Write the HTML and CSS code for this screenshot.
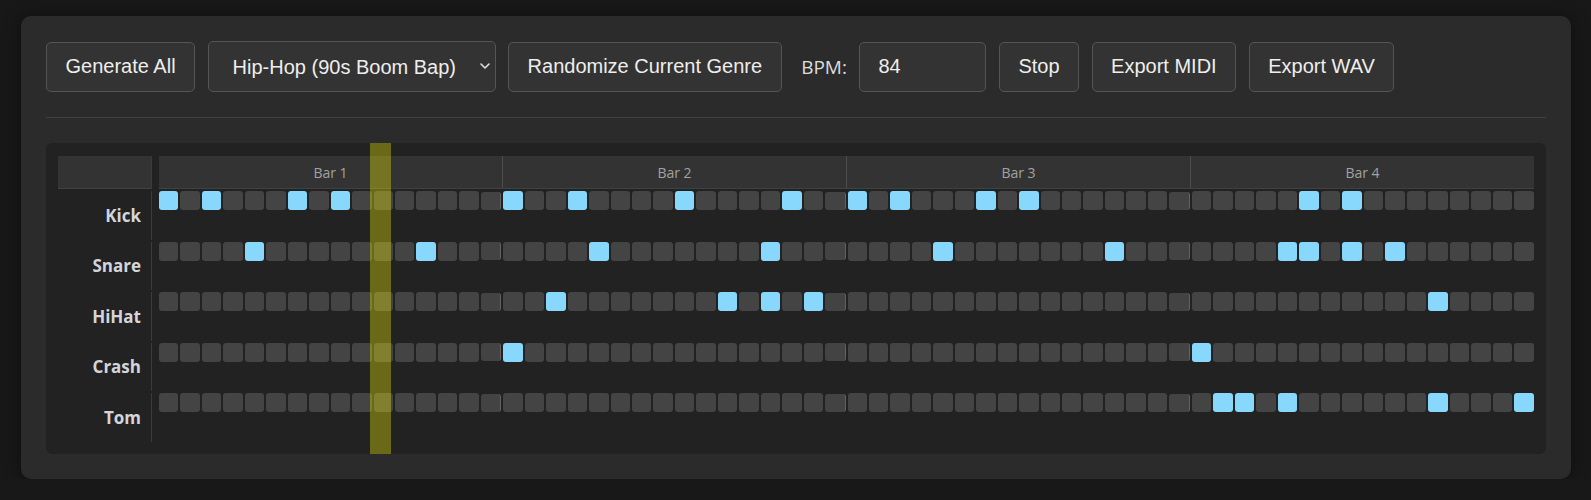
FILE: index.html
```html
<!DOCTYPE html>
<html>
<head>
<meta charset="utf-8">
<title>Drum Sequencer</title>
<link rel="stylesheet" href="styles.css">
</head>
<body>
<div class="panel">
  <div class="toolbar">
    <button class="btn">Generate All</button>
    <div class="select-wrap">
      <select class="select"><option>Hip-Hop (90s Boom Bap)</option></select>
      <svg class="chev" width="10" height="6" viewBox="0 0 10 6"><polyline points="1,1 5,5 9,1" fill="none" stroke="#e0e0e0" stroke-width="1.6" stroke-linecap="round" stroke-linejoin="round"/></svg>
    </div>
    <button class="btn">Randomize Current Genre</button>
    <label class="bpm-label">BPM:</label>
    <input class="bpm" type="text" value="84">
    <button class="btn">Stop</button>
    <button class="btn">Export MIDI</button>
    <button class="btn">Export WAV</button>
  </div>

  <div class="seq-box">
    <div class="seq">
      <div class="corner"></div>
      <div class="bars-head">
        <div class="bh">Bar 1</div>
        <div class="bh">Bar 2</div>
        <div class="bh">Bar 3</div>
        <div class="bh">Bar 4</div>
      </div>

      <div class="lbl">Kick</div>
      <div class="row">
        <div class="bar"><i class="on"></i><i></i><i class="on"></i><i></i><i></i><i></i><i class="on"></i><i></i><i class="on"></i><i></i><i></i><i></i><i></i><i></i><i></i><i></i></div>
        <div class="bar"><i class="on"></i><i></i><i></i><i class="on"></i><i></i><i></i><i></i><i></i><i class="on"></i><i></i><i></i><i></i><i></i><i class="on"></i><i></i><i></i></div>
        <div class="bar"><i class="on"></i><i></i><i class="on"></i><i></i><i></i><i></i><i class="on"></i><i></i><i class="on"></i><i></i><i></i><i></i><i></i><i></i><i></i><i></i></div>
        <div class="bar"><i></i><i></i><i></i><i></i><i></i><i class="on"></i><i></i><i class="on"></i><i></i><i></i><i></i><i></i><i></i><i></i><i></i><i></i></div>
      </div>

      <div class="lbl">Snare</div>
      <div class="row">
        <div class="bar"><i></i><i></i><i></i><i></i><i class="on"></i><i></i><i></i><i></i><i></i><i></i><i></i><i></i><i class="on"></i><i></i><i></i><i></i></div>
        <div class="bar"><i></i><i></i><i></i><i></i><i class="on"></i><i></i><i></i><i></i><i></i><i></i><i></i><i></i><i class="on"></i><i></i><i></i><i></i></div>
        <div class="bar"><i></i><i></i><i></i><i></i><i class="on"></i><i></i><i></i><i></i><i></i><i></i><i></i><i></i><i class="on"></i><i></i><i></i><i></i></div>
        <div class="bar"><i></i><i></i><i></i><i></i><i class="on"></i><i class="on"></i><i></i><i class="on"></i><i></i><i class="on"></i><i></i><i></i><i></i><i></i><i></i><i></i></div>
      </div>

      <div class="lbl">HiHat</div>
      <div class="row">
        <div class="bar"><i></i><i></i><i></i><i></i><i></i><i></i><i></i><i></i><i></i><i></i><i></i><i></i><i></i><i></i><i></i><i></i></div>
        <div class="bar"><i></i><i></i><i class="on"></i><i></i><i></i><i></i><i></i><i></i><i></i><i></i><i class="on"></i><i></i><i class="on"></i><i></i><i class="on"></i><i></i></div>
        <div class="bar"><i></i><i></i><i></i><i></i><i></i><i></i><i></i><i></i><i></i><i></i><i></i><i></i><i></i><i></i><i></i><i></i></div>
        <div class="bar"><i></i><i></i><i></i><i></i><i></i><i></i><i></i><i></i><i></i><i></i><i></i><i class="on"></i><i></i><i></i><i></i><i></i></div>
      </div>

      <div class="lbl">Crash</div>
      <div class="row">
        <div class="bar"><i></i><i></i><i></i><i></i><i></i><i></i><i></i><i></i><i></i><i></i><i></i><i></i><i></i><i></i><i></i><i></i></div>
        <div class="bar"><i class="on"></i><i></i><i></i><i></i><i></i><i></i><i></i><i></i><i></i><i></i><i></i><i></i><i></i><i></i><i></i><i></i></div>
        <div class="bar"><i></i><i></i><i></i><i></i><i></i><i></i><i></i><i></i><i></i><i></i><i></i><i></i><i></i><i></i><i></i><i></i></div>
        <div class="bar"><i class="on"></i><i></i><i></i><i></i><i></i><i></i><i></i><i></i><i></i><i></i><i></i><i></i><i></i><i></i><i></i><i></i></div>
      </div>

      <div class="lbl">Tom</div>
      <div class="row">
        <div class="bar"><i></i><i></i><i></i><i></i><i></i><i></i><i></i><i></i><i></i><i></i><i></i><i></i><i></i><i></i><i></i><i></i></div>
        <div class="bar"><i></i><i></i><i></i><i></i><i></i><i></i><i></i><i></i><i></i><i></i><i></i><i></i><i></i><i></i><i></i><i></i></div>
        <div class="bar"><i></i><i></i><i></i><i></i><i></i><i></i><i></i><i></i><i></i><i></i><i></i><i></i><i></i><i></i><i></i><i></i></div>
        <div class="bar"><i></i><i class="on"></i><i class="on"></i><i></i><i class="on"></i><i></i><i></i><i></i><i></i><i></i><i></i><i class="on"></i><i></i><i></i><i></i><i class="on"></i></div>
      </div>
    </div>
    <div class="playhead"></div>
  </div>
</div>
</body>
</html>
```

FILE: styles.css
```css
* { box-sizing: border-box; }

html, body {
  margin: 0;
  background: #181818;
}

body {
  padding: 16px 20px 0 21px;
  font-family: "Liberation Sans", Arial, sans-serif;
}

.panel {
  background: #2b2b2b;
  border-radius: 10px;
  padding: 25px;
  box-shadow: 0 2px 18px rgba(0, 0, 0, 0.45);
}

.toolbar {
  display: flex;
  align-items: center;
  gap: 12.5px;
  padding-bottom: 25px;
  border-bottom: 1px solid #424242;
  margin-bottom: 25px;
}

.btn {
  height: 50px;
  padding: 0 18.5px;
  background: #333;
  border: 1px solid #555;
  border-radius: 5px;
  color: #eee;
  font: 20px "Liberation Sans", Arial, sans-serif;
  white-space: nowrap;
}

.select-wrap {
  position: relative;
  display: flex;
}

.select {
  appearance: none;
  -webkit-appearance: none;
  width: 288px;
  height: 51px;
  padding: 0 0 0 24px;
  background: #333;
  border: 1px solid #555;
  border-radius: 5px;
  color: #eee;
  font: 20px "Liberation Sans", Arial, sans-serif;
}

.chev {
  position: absolute;
  right: 6px;
  top: 22px;
}

.bpm-label {
  font-family: "Open Sans", sans-serif;
  font-size: 19px;
  color: #ddd;
  margin-left: 7px;
}

.bpm {
  width: 127px;
  height: 50px;
  padding: 0 18px;
  background: #333;
  border: 1px solid #555;
  border-radius: 5px;
  color: #eee;
  font: 20px "Liberation Sans", Arial, sans-serif;
}

.seq-box {
  position: relative;
  background: #222;
  border-radius: 6px;
  padding: 13px 12px 12px;
}

.seq {
  display: grid;
  grid-template-columns: 94px 1fr;
  grid-template-rows: 33px repeat(5, 48.5px);
  column-gap: 7px;
  row-gap: 2px;
}

.corner {
  background: #333;
  border-right: 1px solid #3b3b3b;
  border-bottom: 1px solid #414141;
}

.bars-head {
  display: flex;
  background: #333;
  border-bottom: 1px solid #414141;
}

.bh {
  flex: 1;
  display: flex;
  align-items: center;
  justify-content: center;
  font-family: "Open Sans", sans-serif;
  font-size: 14px;
  color: #a2a2a2;
}

.bh + .bh {
  border-left: 1px solid #4c4c4c;
}

.lbl {
  display: flex;
  align-items: center;
  justify-content: flex-end;
  padding-right: 10px;
  border-right: 1px solid #3b3b3b;
  font-family: "Open Sans", sans-serif;
  font-weight: 700;
  font-size: 17px;
  color: #d2d6da;
}

.row {
  display: flex;
  gap: 2px;
  align-items: flex-start;
}

.bar {
  flex: 1;
  display: flex;
  gap: 2px;
}

.bar > i {
  flex: 1;
  height: 19px;
  background: #444;
  border-radius: 3px;
}

.bar > i.on {
  background: #87d8fc;
}

.bar:not(:last-child) > i:last-child {
  height: 18px;
  margin-top: 0.5px;
  background: #434343;
  border-right: 1px solid #626262;
}

.bar:not(:last-child) > i.on:last-child {
  background: #87d8fc;
}

.playhead {
  position: absolute;
  top: 0;
  bottom: 0;
  left: 324px;
  width: 21px;
  background: rgba(255, 255, 0, 0.32);
}
```
